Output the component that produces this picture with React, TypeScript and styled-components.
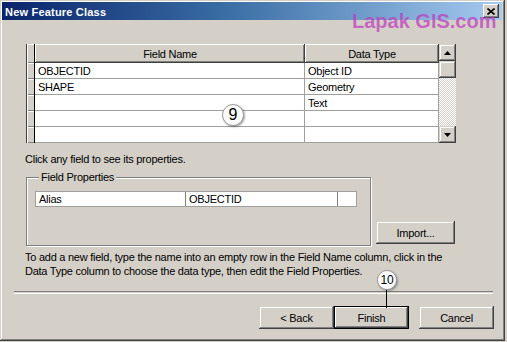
import React from 'react';
import styled, { createGlobalStyle } from 'styled-components';

const GlobalStyle = createGlobalStyle`
    html, body {
        margin: 0;
        padding: 0;
        background: #d4d0c8;
    }
    body {
        font-family: 'Liberation Sans', Arial, sans-serif;
        font-size: 11px;
        color: #000;
    }
`;

const fields = [
    { name: 'OBJECTID', type: 'Object ID' },
    { name: 'SHAPE', type: 'Geometry' },
    { name: '', type: 'Text' },
    { name: '', type: '' },
    { name: '', type: '' },
];

const Arrow = ({ up }: { up?: boolean }) => (
    <svg width="7" height="4" viewBox="0 0 7 4">
        {up ? <path d="M3.5 0 L7 4 L0 4 Z" fill="#000" /> : <path d="M0 0 L7 0 L3.5 4 Z" fill="#000" />}
    </svg>
);

export default function App() {
    return (
        <>
            <GlobalStyle />
            <Window>
                <TitleBar>
                    <TitleText>New Feature Class</TitleText>
                    <CloseButton>
                        <svg width="8" height="7" viewBox="0 0 8 7">
                            <path d="M0.5 0.5 L7.5 6.5 M7.5 0.5 L0.5 6.5" stroke="#000" strokeWidth="1.6" />
                        </svg>
                    </CloseButton>
                </TitleBar>
                <Body>
                    <GridWrap>
                        <GridTable>
                            <HeaderRow>
                                <SelectorCell />
                                <HeaderCell>Field Name</HeaderCell>
                                <HeaderCell>Data Type</HeaderCell>
                            </HeaderRow>
                            {fields.map((f, i) => (
                                <Row key={i}>
                                    <SelectorCell />
                                    <Cell>{f.name}</Cell>
                                    <Cell>{f.type}</Cell>
                                </Row>
                            ))}
                        </GridTable>
                        <ScrollBar>
                            <ScrollButton>
                                <Arrow up />
                            </ScrollButton>
                            <ScrollThumb />
                            <ScrollTrack />
                            <ScrollButton>
                                <Arrow />
                            </ScrollButton>
                        </ScrollBar>
                        <Callout style={{ left: 196, top: 60 }} $size={22}>
                            9
                        </Callout>
                    </GridWrap>

                    <Hint>Click any field to see its properties.</Hint>

                    <PropsRow>
                        <GroupBox>
                            <Legend>Field Properties</Legend>
                            <PropTable>
                                <PropName>Alias</PropName>
                                <PropValue>OBJECTID</PropValue>
                                <PropExtra />
                            </PropTable>
                        </GroupBox>
                        <ImportButton>Import...</ImportButton>
                    </PropsRow>

                    <Instructions>
                        To add a new field, type the name into an empty row in the Field Name column, click in the
                        Data Type column to choose the data type, then edit the Field Properties.
                    </Instructions>

                    <Separator />

                    <ButtonRow>
                        <Button>&lt; Back</Button>
                        <DefaultButton>
                            Finish
                            <Pointer />
                            <Callout style={{ left: 43, top: -36 }} $size={20}>
                                10
                            </Callout>
                        </DefaultButton>
                        <CancelButton>Cancel</CancelButton>
                    </ButtonRow>
                </Body>
                <Watermark>Lapak GIS.com</Watermark>
            </Window>
        </>
    );
}

const Window = styled.div`
    position: relative;
    width: 505px;
    height: 341px;
    box-sizing: border-box;
    padding: 2px 3px 3px 2px;
    background: #d4d0c8;
    box-shadow: inset -1px -1px #404040, inset 1px 1px #d4d0c8, inset -2px -2px #808080, inset 2px 2px #fff;
    overflow: hidden;
`;

const TitleBar = styled.div`
    height: 18px;
    display: flex;
    align-items: center;
    justify-content: space-between;
    padding: 0 3px 0 3px;
    background: linear-gradient(to right, #0a246a 0%, #3a6ea5 45%, #a6caf0 100%);
`;

const TitleText = styled.span`
    color: #fff;
    font-weight: bold;
    font-size: 11px;
    letter-spacing: 0.2px;
    padding-top: 1px;
`;

const CloseButton = styled.div`
    width: 16px;
    height: 14px;
    box-sizing: border-box;
    display: flex;
    align-items: center;
    justify-content: center;
    background: #d4d0c8;
    box-shadow: inset -1px -1px #404040, inset 1px 1px #fff, inset -2px -2px #808080;
`;

const Body = styled.div`
    display: flex;
    flex-direction: column;
    padding: 24px 8px 0 24px;
`;

const GridWrap = styled.div`
    position: relative;
    display: flex;
    width: 430px;
    height: 99px;
`;

const GridTable = styled.div`
    display: flex;
    flex-direction: column;
    width: 413px;
    background: #fff;
    overflow: hidden;
`;

const HeaderRow = styled.div`
    display: grid;
    grid-template-columns: 9px 270px 134px;
    height: 19px;
`;

const Row = styled(HeaderRow)`
    height: 16px;
`;

const SelectorCell = styled.div`
    background: #d4d0c8;
    box-sizing: border-box;
    border-left: 1px solid #404040;
    border-right: 1px solid #000;
    box-shadow: inset 1px 1px #fff, inset 0 -1px #808080;
`;

const HeaderCell = styled.div`
    background: #d4d0c8;
    box-sizing: border-box;
    display: flex;
    align-items: center;
    justify-content: center;
    letter-spacing: -0.25px;
    box-shadow: inset -1px -1px #404040, inset 1px 1px #fff, inset -2px -2px #808080;
`;

const Cell = styled.div`
    box-sizing: border-box;
    display: flex;
    align-items: center;
    padding-left: 3px;
    letter-spacing: -0.25px;
    border-right: 1px solid #a0a0a0;
    border-bottom: 1px solid #a0a0a0;
`;

const ScrollBar = styled.div`
    display: flex;
    flex-direction: column;
    width: 17px;
`;

const raised = `
    background: #d4d0c8;
    box-shadow: inset -1px -1px #404040, inset 1px 1px #d4d0c8, inset -2px -2px #808080, inset 2px 2px #fff;
`;

const ScrollButton = styled.div`
    ${raised}
    height: 17px;
    display: flex;
    align-items: center;
    justify-content: center;
`;

const ScrollThumb = styled.div`
    ${raised}
    height: 17px;
`;

const ScrollTrack = styled.div`
    flex: 1;
    background-color: #d4d0c8;
    background-image: conic-gradient(#fff 25%, #d4d0c8 0 50%, #fff 0 75%, #d4d0c8 0);
    background-size: 2px 2px;
`;

const Callout = styled.div<{ $size: number }>`
    position: absolute;
    width: ${(p) => p.$size}px;
    height: ${(p) => p.$size}px;
    box-sizing: border-box;
    border-radius: 50%;
    background: #fff;
    border: 1px solid #9a9a9a;
    box-shadow: 1px 1px 2px rgba(0, 0, 0, 0.35);
    display: flex;
    align-items: center;
    justify-content: center;
    font-size: ${(p) => (p.$size > 21 ? 16 : 12)}px;
    color: #000;
`;

const Hint = styled.div`
    margin: 10px 0 0 -1px;
    line-height: 13px;
    letter-spacing: -0.25px;
`;

const PropsRow = styled.div`
    display: flex;
    align-items: flex-end;
    margin-top: 5px;
`;

const GroupBox = styled.fieldset`
    width: 345px;
    height: 75px;
    box-sizing: border-box;
    margin: 0;
    padding: 7px 0 0 8px;
    border: 1px solid #808080;
    box-shadow: 1px 1px 0 #fff, inset 1px 1px 0 #fff;
`;

const Legend = styled.legend`
    padding: 0 2px;
    margin-left: 4px;
    line-height: 13px;
    background: #d4d0c8;
    letter-spacing: -0.25px;
`;

const PropTable = styled.div`
    display: grid;
    grid-template-columns: 150px 152px 20px;
    height: 16px;
    width: 322px;
    box-sizing: border-box;
    border: 1px solid #a0a0a0;
    background: #fff;
`;

const PropName = styled.div`
    display: flex;
    align-items: center;
    padding-left: 3px;
    border-right: 1px solid #808080;
    letter-spacing: -0.25px;
`;

const PropValue = styled(PropName)``;

const PropExtra = styled.div``;

const Button = styled.div`
    ${raised}
    position: relative;
    width: 75px;
    height: 23px;
    box-sizing: border-box;
    display: flex;
    align-items: center;
    justify-content: center;
    letter-spacing: -0.25px;
`;

const ImportButton = styled(Button)`
    width: 79px;
    margin: 0 0 2px 5px;
`;

const DefaultButton = styled(Button)`
    box-shadow: inset 0 0 0 1px #000, inset -2px -2px #404040, inset 2px 2px #fff, inset -3px -3px #808080;
`;

const CancelButton = styled(Button)`
    margin-left: 10px;
`;

const Pointer = styled.div`
    position: absolute;
    left: 52px;
    top: -17px;
    width: 1px;
    height: 19px;
    background: #000;
`;

const Instructions = styled.div`
    margin: 4px 0 0 -1px;
    width: 440px;
    line-height: 14px;
    letter-spacing: -0.25px;
`;

const Separator = styled.div`
    margin: 13px 1px 0 -12px;
    height: 1px;
    border-top: 1px solid #808080;
    border-bottom: 1px solid #fff;
`;

const ButtonRow = styled.div`
    display: flex;
    justify-content: flex-end;
    margin-top: 12px;
`;

const Watermark = styled.div`
    position: absolute;
    left: 352px;
    top: 11px;
    font-size: 20px;
    line-height: 1;
    font-weight: bold;
    color: rgba(190, 60, 190, 0.72);
    white-space: nowrap;
    pointer-events: none;
`;
